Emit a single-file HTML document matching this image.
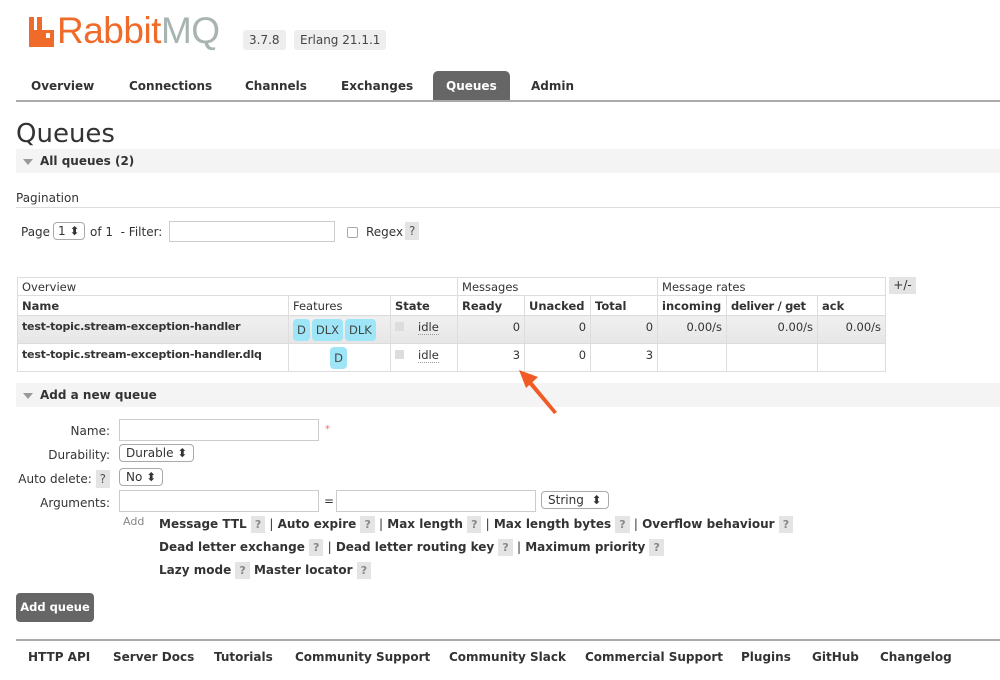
<!DOCTYPE html>
<html><head><meta charset="utf-8"><style>
*{margin:0;padding:0;box-sizing:border-box}
body{width:1000px;height:680px;background:#fff;font-family:"DejaVu Sans","Liberation Sans",sans-serif;font-size:12px;color:#333;position:relative;overflow:hidden}
.a{position:absolute;white-space:nowrap}
.b{font-weight:bold}
.badge{background:#eee;border-radius:3px;color:#444;font-size:12px;padding:3px 6px}
.bar{background:#f4f4f4;left:16px;width:984px;height:24px}
.tri{width:0;height:0;border-left:5px solid transparent;border-right:5px solid transparent;border-top:6px solid #999}
.inp{border:1px solid #ccc;background:#fff}
.sel{border:1px solid #aaa;border-radius:4px;background:#fff;padding:1px 6px;font-size:12px}
.q{background:#e4e4e4;color:#888;font-size:11px;padding:2px 4px}
td,th{border:1px solid #ddd;font-size:11.5px;padding:0 4px;height:20px;white-space:nowrap;overflow:hidden}
table{border-collapse:collapse;position:absolute;left:17px;top:277px;table-layout:fixed;width:868px}
th{text-align:left;font-weight:bold}
.g th{font-weight:normal;height:18px}
.r td{height:28px;vertical-align:top;padding-top:4px}
.r1 td{background:linear-gradient(#f0f0f0,#e6e6e6)}
.n{text-align:right}
.nm{font-size:11px;letter-spacing:-0.2px}
.f{display:inline-block;background:#9ee6f7;border-radius:4px;padding:4px 4px;color:#444;margin-right:2px}
.st{display:inline-block;width:9px;height:9px;background:#ddd;margin-right:14px;vertical-align:top;margin-top:2px}
.idle{border-bottom:1px dotted #999}
.lab{right:890px;text-align:right}
</style></head><body>
<svg class="a" style="left:28px;top:16px" width="28" height="32" viewBox="0 0 28 32"><path d="M1 1h5v13h3V1h5v13h12v17H1z M18 17v5h4v-5z" fill="#f06a2a" fill-rule="evenodd"/></svg>
<div class="a" style="left:57px;top:10px;font-size:37px;font-family:'Liberation Sans',sans-serif;letter-spacing:-0.5px"><span style="color:#f06a2a">Rabbit</span><span style="color:#a7b4b1">MQ</span></div>
<div class="a badge" style="left:243px;top:30px">3.7.8</div>
<div class="a badge" style="left:294px;top:30px">Erlang 21.1.1</div>

<div class="a" style="left:433px;top:71px;width:77px;height:30px;background:#666;border-radius:5px 5px 0 0"></div>
<div class="a" style="left:16px;top:100px;width:984px;height:2px;background:#aaa"></div>
<div class="a b" style="left:31px;top:79px">Overview</div>
<div class="a b" style="left:129px;top:79px">Connections</div>
<div class="a b" style="left:245px;top:79px">Channels</div>
<div class="a b" style="left:341px;top:79px">Exchanges</div>
<div class="a b" style="left:446px;top:79px;color:#fff">Queues</div>
<div class="a b" style="left:531px;top:79px">Admin</div>

<div class="a" style="left:16px;top:119px;font-size:26px">Queues</div>
<div class="a bar" style="top:149px"></div>
<div class="a tri" style="left:23px;top:159px"></div>
<div class="a b" style="left:40px;top:154px">All queues (2)</div>
<div class="a" style="left:16px;top:191px">Pagination</div>
<div class="a" style="left:16px;top:207px;width:984px;height:1px;background:#ddd"></div>
<div class="a" style="left:21px;top:225px">Page</div>
<div class="a sel" style="left:53px;top:222px;padding:1px 4px">1 ⬍</div>
<div class="a" style="left:90px;top:225px">of 1 &nbsp;- Filter:</div>
<div class="a inp" style="left:169px;top:221px;width:166px;height:21px"></div>
<div class="a" style="left:347px;top:227px;width:11px;height:11px;border:1px solid #aaa;border-radius:2px"></div>
<div class="a" style="left:366px;top:225px">Regex</div>
<div class="a q" style="left:405px;top:222px;color:#555;font-size:12px">?</div>

<div class="a bar" style="top:383px"></div>
<div class="a tri" style="left:23px;top:393px"></div>
<div class="a b" style="left:40px;top:388px">Add a new queue</div>

<table>
<colgroup><col style="width:271px"><col style="width:102px"><col style="width:67px"><col style="width:67px"><col style="width:66px"><col style="width:67px"><col style="width:69px"><col style="width:91px"><col style="width:68px"></colgroup>
<tr class="g"><th colspan="3">Overview</th><th colspan="3">Messages</th><th colspan="3">Message rates</th></tr>
<tr><th>Name</th><th style="font-weight:normal">Features</th><th>State</th><th>Ready</th><th>Unacked</th><th>Total</th><th>incoming</th><th style="letter-spacing:-0.3px">deliver / get</th><th>ack</th></tr>
<tr class="r r1"><td class="b nm">test-topic.stream-exception-handler</td><td style="padding-top:3px"><span class="f">D</span><span class="f">DLX</span><span class="f">DLK</span></td><td><span class="st"></span><span class="idle">idle</span></td><td class="n">0</td><td class="n">0</td><td class="n">0</td><td class="n">0.00/s</td><td class="n">0.00/s</td><td class="n">0.00/s</td></tr>
<tr class="r"><td class="b nm">test-topic.stream-exception-handler.dlq</td><td style="text-align:center;padding-top:3px"><span class="f">D</span></td><td><span class="st"></span><span class="idle">idle</span></td><td class="n">3</td><td class="n">0</td><td class="n">3</td><td></td><td></td><td></td></tr>
</table>
<div class="a" style="left:889px;top:277px;width:27px;height:17px;background:#e4e4e4;text-align:center;line-height:17px">+/-</div>
<svg class="a" style="left:510px;top:364px" width="60" height="56"><path d="M47 48L44 50L16 17L19 14Z" fill="#f05a24"/><path d="M9 6L28 13L16 24Z" fill="#f05a24"/></svg>

<div class="a lab" style="top:424px">Name:</div>
<div class="a inp" style="left:119px;top:419px;width:200px;height:22px"></div>
<div class="a" style="left:325px;top:424px;color:#f66;font-size:10px">*</div>
<div class="a lab" style="top:448px">Durability:</div>
<div class="a sel" style="left:119px;top:444px">Durable ⬍</div>
<div class="a lab" style="top:472px">Auto delete: <span class="q" style="color:#555;font-size:12px">?</span></div>
<div class="a sel" style="left:119px;top:468px">No ⬍</div>
<div class="a lab" style="top:496px">Arguments:</div>
<div class="a inp" style="left:119px;top:490px;width:200px;height:22px"></div>
<div class="a" style="left:324px;top:494px">=</div>
<div class="a inp" style="left:336px;top:490px;width:200px;height:22px"></div>
<div class="a sel" style="left:541px;top:491px">String &nbsp;⬍</div>
<div class="a" style="left:123px;top:515px;color:#888;font-size:11px">Add</div>
<div class="a b" style="left:159px;top:517px">Message TTL <span class="q">?</span> <span style="font-weight:normal">|</span> Auto expire <span class="q">?</span> <span style="font-weight:normal">|</span> Max length <span class="q">?</span> <span style="font-weight:normal">|</span> Max length bytes <span class="q">?</span> <span style="font-weight:normal">|</span> Overflow behaviour <span class="q">?</span></div>
<div class="a b" style="left:159px;top:540px">Dead letter exchange <span class="q">?</span> <span style="font-weight:normal">|</span> Dead letter routing key <span class="q">?</span> <span style="font-weight:normal">|</span> Maximum priority <span class="q">?</span></div>
<div class="a b" style="left:159px;top:563px">Lazy mode <span class="q">?</span> Master locator <span class="q">?</span></div>

<div class="a b" style="left:16px;top:593px;width:78px;height:29px;background:#666;color:#fff;border-radius:4px;text-align:center;line-height:29px;font-size:11.5px">Add queue</div>

<div class="a" style="left:16px;top:639px;width:984px;height:2px;background:#aaa"></div>
<div class="a b" style="left:28px;top:650px">HTTP API</div>
<div class="a b" style="left:113px;top:650px">Server Docs</div>
<div class="a b" style="left:214px;top:650px">Tutorials</div>
<div class="a b" style="left:295px;top:650px">Community Support</div>
<div class="a b" style="left:449px;top:650px">Community Slack</div>
<div class="a b" style="left:585px;top:650px">Commercial Support</div>
<div class="a b" style="left:741px;top:650px">Plugins</div>
<div class="a b" style="left:812px;top:650px">GitHub</div>
<div class="a b" style="left:880px;top:650px">Changelog</div>
</body></html>
